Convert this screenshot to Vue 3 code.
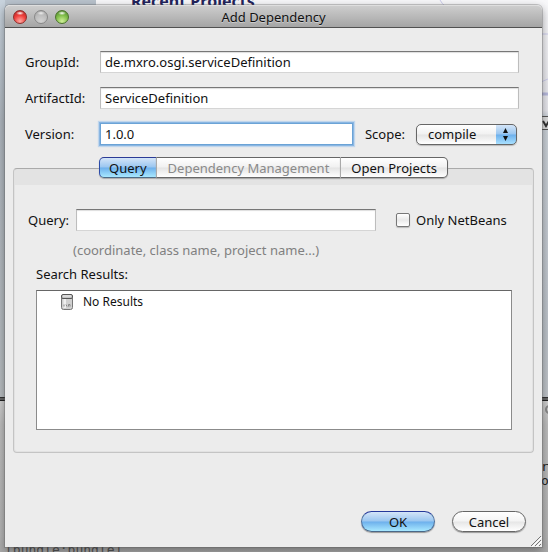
<script setup>
import { ref } from 'vue'

const groupId = ref('de.mxro.osgi.serviceDefinition')
const artifactId = ref('ServiceDefinition')
const version = ref('1.0.0')
const scope = ref('compile')
const scopes = ['compile', 'provided', 'runtime', 'test']
const query = ref('')
const onlyNetBeans = ref(false)
const activeTab = ref('Query')
const tabs = [
  { name: 'Query', disabled: false },
  { name: 'Dependency Management', disabled: true },
  { name: 'Open Projects', disabled: false }
]
const results = ['No Results']
const lights = ['red', 'gray', 'green']
</script>

<template>
  <div class="desktop">
    <!-- Pieces of the application behind the dialog -->
    <div class="behind" aria-hidden="true">
      <div class="sheet"></div>
      <div class="side left"></div>
      <div class="side right"></div>
      <div class="heading">Recent Projects</div>
      <svg class="swirl" width="110" height="120" viewBox="0 0 110 120">
        <path d="M2 0Q4 4 8 7M101 34H110M101 83Q105 81 110 79" fill="none" stroke="#ccccec" />
        <path d="M101 94H110" stroke="#b7b9dc" stroke-width="3" />
      </svg>
      <div class="chevron"><svg width="8" height="8"><path d="M1 1L4 6L7 1" fill="none" stroke="#333" stroke-width="2" /></svg></div>
      <div class="lower"></div>
      <div class="divider"></div>
      <div class="knob"></div>
      <div class="code one">r</div>
      <div class="code two">o</div>
      <div class="bottom">[bundle:bundle]</div>
    </div>

    <main class="dialog">
      <header class="titlebar">
        <div class="lights">
          <button v-for="l in lights" :key="l" type="button" class="light" :class="l" :aria-label="l"></button>
        </div>
        <h1>Add Dependency</h1>
      </header>

      <form class="content" @submit.prevent>
        <div class="fields">
          <label for="group">GroupId:</label>
          <input id="group" v-model="groupId" class="text" type="text" />
          <label for="artifact">ArtifactId:</label>
          <input id="artifact" v-model="artifactId" class="text" type="text" />
          <label for="version">Version:</label>
          <div class="version-row">
            <input id="version" v-model="version" class="text focused" type="text" />
            <label for="scope">Scope:</label>
            <div class="popup">
              <select id="scope" v-model="scope">
                <option v-for="s in scopes" :key="s">{{ s }}</option>
              </select>
              <svg class="arrows" width="5" height="13" viewBox="0 0 5 13">
                <path d="M2.5 0L5 5H0zM2.5 13L5 8H0z" fill="#111" />
              </svg>
            </div>
          </div>
        </div>

        <section class="tabbed">
          <div class="tabs" role="tablist">
            <button
              v-for="t in tabs" :key="t.name" type="button" role="tab" class="tab"
              :class="{ active: activeTab === t.name }" :disabled="t.disabled"
              :aria-selected="activeTab === t.name" @click="activeTab = t.name"
            >{{ t.name }}</button>
          </div>
          <div class="panel">
            <div class="query-row">
              <label for="query">Query:</label>
              <input id="query" v-model="query" class="text" type="text" />
              <label class="check"><input v-model="onlyNetBeans" type="checkbox" />Only NetBeans</label>
            </div>
            <p class="hint">(coordinate, class name, project name...)</p>
            <p id="results-label" class="results-label">Search Results:</p>
            <ul class="results" aria-labelledby="results-label">
              <li v-for="r in results" :key="r">
                <svg width="14" height="16" viewBox="0 0 14 16">
                  <path d="M1.500 4H12.500V13.500Q12.500 15.500 10.500 15.500H3.500Q1.500 15.500 1.500 13.500Z" fill="#d0d0d0" stroke="#777" />
                  <path d="M3.500 5H6V14H3.500z" fill="#efefef" />
                  <rect x="1.500" y="0.500" width="11" height="4" rx="1.500" fill="#c4c4c4" stroke="#555" />
                  <path d="M3 2H11" stroke="#eee" />
                  <path d="M4 12.500V10.500M6 10.500L7 12.500M8.500 12.500V10.500H10V12.500" fill="none" stroke="#888" />
                </svg>
                {{ r }}
              </li>
            </ul>
          </div>
        </section>

        <footer class="actions">
          <button type="submit" class="pill default">OK</button>
          <button type="button" class="pill">Cancel</button>
        </footer>
      </form>
      <svg class="grip" width="12" height="12" viewBox="0 0 12 12">
        <path d="M1 11L11 1M5 11L11 5M9 11L11 9" stroke="#777" />
        <path d="M2 12L12 2M6 12L12 6" stroke="#fff" />
      </svg>
    </main>
  </div>
</template>

<style>
body { margin: 0; }
</style>

<style scoped>
* { box-sizing: border-box; }
.desktop {
  position: relative;
  display: flex;
  min-height: 100vh;
  padding: 5px 6px 5px 5px;
  overflow: hidden;
  background: #b9c3cd;
  color: #111;
  font: 13px/16px "Lucida Grande", "Noto Sans", sans-serif;
}
button, input, select { font: inherit; color: inherit; }

.behind { position: absolute; inset: 0; overflow: hidden; }
.behind > * { position: absolute; }
.sheet { inset: 0 0 auto 96px; height: 28px; background: #f8f8fa; }
.side { top: 0; bottom: 0; }
.left { left: 0; width: 5px; background: linear-gradient(#c8d3dd, #aeb6be 22%, #b4babf 60%, #c0c0c0); }
.right { right: 0; width: 6px; background: linear-gradient(#f8f8fa, #e6e6ec 20%, #ccd2d9 21%, #bcc2c9 60%, #c4c4c4); }
.heading { top: -9px; left: 131px; font-size: 16px; line-height: 20px; font-weight: 700; color: #23245c; }
.swirl { top: 0; right: 0; left: auto; }
.chevron {
  top: 116px; right: 0; width: 6px; height: 14px; padding-top: 3px; overflow: hidden;
  border-top: 1px solid #555; border-bottom: 1px solid #555; background: #ddd;
}
.chevron svg { display: block; }
.lower { inset: 400px 0 0; background: linear-gradient(#d0d0d0, #bdbdbd 16%, #b4b4b4 90%, #a8a8a8); }
.divider { inset: 397px 0 auto; height: 4px; border-top: 1px solid #333; border-bottom: 1px solid #222; background: #666; }
.knob { top: 405px; left: 545px; width: 9px; height: 9px; border: 2px solid #888; border-radius: 50%; background: #ccc; }
.code { left: 541px; font: 13px/14px "DejaVu Sans Mono", monospace; color: #222; }
.one { top: 460px; }
.two { top: 474px; }
.bottom { top: 542px; left: 5px; font: 13px/16px "DejaVu Sans Mono", monospace; color: #555; }

.dialog {
  position: relative;
  display: flex;
  flex: 1;
  flex-direction: column;
  min-width: 0;
  border-radius: 5px 5px 0 0;
  background: #ececec;
  box-shadow: 0 0 0 1px rgba(90, 90, 90, 0.3), 0 3px 10px rgba(0, 0, 0, 0.4);
}
.titlebar {
  display: grid;
  grid-template-columns: 72px 1fr 72px;
  align-items: center;
  height: 23px;
  padding: 0 0 0 8px;
  border-top: 1px solid #dedede;
  border-bottom: 1px solid #515151;
  border-radius: 5px 5px 0 0;
  background: linear-gradient(#cdcdcd, #a5a5a5);
}
.titlebar h1 { margin: 0; padding-right: 8px; text-align: center; font-size: 13px; line-height: 16px; font-weight: 400; text-shadow: 0 1px #ccc; }
.lights { display: flex; gap: 7px; }
.light { width: 14px; height: 14px; padding: 0; border: 1px solid #888; border-radius: 50%; }
.red { border-color: #8e2c2a; background: radial-gradient(ellipse 4px 2px at 50% 18%, #fff, transparent), radial-gradient(circle at 50% 85%, #ffaaa2, #f0403c 50%, #a82422); }
.gray { background: radial-gradient(ellipse 4px 2px at 50% 18%, #eee, transparent), radial-gradient(circle at 50% 85%, #d2d2d2, #bcbcbc 55%, #a0a0a0); }
.green { border-color: #4b732d; background: radial-gradient(ellipse 4px 2px at 50% 18%, #fff, transparent), radial-gradient(circle at 50% 85%, #d1f09a, #82bf4b 50%, #487d2a); }

.content { display: flex; flex: 1; flex-direction: column; padding: 23px 8px 15px; }
.fields {
  display: grid;
  grid-template-columns: 75px 1fr;
  row-gap: 14px;
  align-items: center;
  padding: 0 15px 0 12px;
}
.text {
  width: 100%;
  min-width: 0;
  height: 22px;
  padding: 0 4px;
  border: 1px solid #bdbdbd;
  border-top-color: #777;
  border-bottom-color: #d5d5d5;
  border-radius: 0;
  outline: none;
  background: #fff;
  box-shadow: inset 0 1px 1px #ddd;
}
.version-row { display: flex; align-items: center; height: 22px; }
.version-row .text { flex: 1; }
.version-row label { margin: 0 11px 0 12px; }
.focused { border-color: #6ba3d6; box-shadow: 0 0 0 1px #8ab6e2, 0 0 1px 2px #c0d6ec; }
.popup { position: relative; width: 101px; margin-right: 2px; }
.popup select {
  display: block;
  width: 100%;
  height: 21px;
  padding: 0 24px 0 11px;
  appearance: none;
  border: 1px solid #666;
  border-radius: 5px;
  background:
    linear-gradient(#d4e5f8, #9ac6f0 48%, #6db0ec 52%, #a8e0ff) right / 20px 100% no-repeat,
    linear-gradient(#fff, #f1f1f1 48%, #e4e4e4 52%, #fff);
  box-shadow: 0 1px 1px #bbb;
}
.arrows { position: absolute; top: 4px; right: 9px; pointer-events: none; }

.tabbed { display: flex; flex-direction: column; margin-top: 12px; }
.tabs { position: relative; z-index: 1; display: flex; align-self: center; margin-bottom: -10px; }
.tab {
  height: 21px;
  padding: 0 11px;
  border: solid #666;
  border-width: 1px 0;
  background: linear-gradient(#fff, #f1f1f1 48%, #e4e4e4 52%, #fff);
  box-shadow: 0 1px 1px #aaa;
  white-space: nowrap;
}
.tab + .tab { border-left: 1px solid #aaa; }
.tab:first-child { padding: 0 9px; border-left-width: 1px; border-radius: 5px 0 0 5px; }
.tab:last-child { padding: 0 10px; border-right-width: 1px; border-radius: 0 5px 5px 0; }
.tab:disabled { color: #8a8a8a; }
.tab.active { border-color: #2b3b96 #5c86b5 #4d6c88 #2b4ba8; background: linear-gradient(#d4e5f8, #9ac6f0 48%, #6db0ec 52%, #a8e8ff); }
.panel {
  padding: 40px 21px 22px 22px;
  border: 1px solid #c4c4c4;
  border-top-color: #aaa;
  border-radius: 4px;
  background: linear-gradient(#e3e3e3, #e3e3e3) top / 100% 16px no-repeat;
  box-shadow: inset 0 0 0 1px #e2e2e2;
}
.query-row { display: flex; align-items: center; padding-right: 6px; margin-left: -8px; }
.query-row > label:first-child { flex: none; width: 48px; }
.query-row .text { flex: 1; }
.check { display: flex; flex: none; align-items: center; gap: 6px; width: 110px; margin: 0 0 0 20px; white-space: nowrap; }
.check input {
  flex: none;
  width: 14px;
  height: 14px;
  margin: 0;
  appearance: none;
  border: 1px solid #777;
  border-radius: 2px;
  background: linear-gradient(#fff, #e9e9e9 50%, #fff);
  box-shadow: 0 1px 1px #bbb;
}
.check input:checked { background: #6db0ec; }
.hint { margin: 11px 0 0 37px; color: #808080; }
.results-label { margin: 8px 0; }
.results {
  height: 140px;
  margin: 0;
  padding: 2px 23px;
  overflow: auto;
  border: 1px solid #8b8b8b;
  border-top-color: #666;
  background: #fff;
  list-style: none;
}
.results li { display: flex; align-items: center; gap: 9px; height: 18px; font-size: 12px; }

.actions { display: flex; justify-content: flex-end; gap: 17px; margin-top: auto; padding-right: 8px; }
.pill {
  width: 74px;
  height: 21px;
  padding: 0;
  border: 1px solid #666;
  border-radius: 11px;
  background: linear-gradient(#fff, #f4f4f4 48%, #e6e6e6 52%, #fff);
  box-shadow: 0 1px 1px #999;
}
.pill.default { border-color: #26399a #4b6f9d #4a6888; background: linear-gradient(#d4e5f8, #9ac6f0 48%, #6db0ec 52%, #a8e8ff); }
.grip { position: absolute; right: 0; bottom: 0; }
</style>
